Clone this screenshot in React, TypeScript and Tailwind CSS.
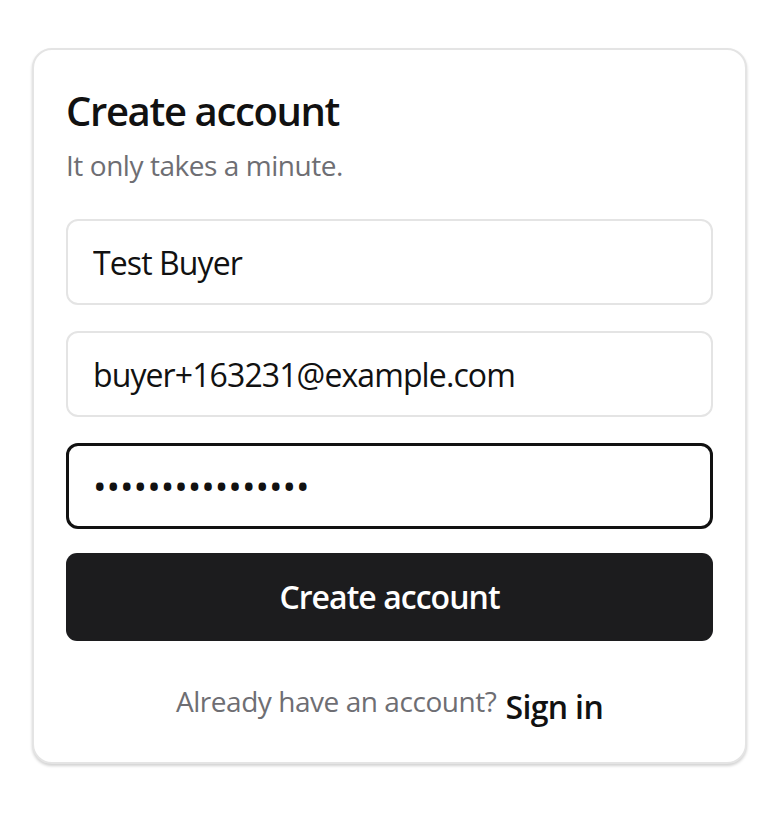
export default function App() {
  return (
    <div className="min-h-screen bg-white px-[32px] pt-[48px] font-['Open_Sans',sans-serif] tracking-[-0.028em]">
      <div className="w-[715px] rounded-[20px] border-2 border-[#e4e4e4] bg-white px-[32px] pt-[37px] pb-[35px] shadow-[0_2px_3px_rgba(0,0,0,0.18)]">
        <h1 className="text-[40px] font-semibold leading-[48px] tracking-[-0.034em] text-[#111]">Create account</h1>
        <p className="mt-[12px] text-[28px] leading-[36px] text-[#6e6e73]">It only takes a minute.</p>

        <form className="mt-[36px] flex flex-col gap-[26px]" onSubmit={(e) => e.preventDefault()}>
          <input
            type="text"
            defaultValue="Test Buyer"
            className="h-[86px] w-full rounded-[12px] border-2 border-[#e4e4e4] px-[25px] text-[32px] tracking-[-0.028em] text-[#111] outline-none"
          />
          <input
            type="email"
            defaultValue="buyer+163231@example.com"
            className="h-[86px] w-full rounded-[12px] border-2 border-[#e4e4e4] px-[25px] text-[32px] tracking-[-0.028em] text-[#111] outline-none"
          />
          <input
            type="password"
            defaultValue="testpassword1234"
            className="h-[86px] w-full rounded-[12px] border-[3px] border-[#111] px-[24px] text-[36px] tracking-normal text-[#111] outline-none"
          />
          <button
            type="submit"
            className="-mt-[2px] h-[88px] w-full rounded-[11px] bg-[#1c1c1e] text-[32px] font-semibold tracking-[-0.03em] text-white"
          >
            Create account
          </button>
        </form>

        <div className="mt-[42px] flex items-start justify-center gap-[9px]">
          <span className="text-[28px] leading-[36px] text-[#6e6e73]">Already have an account?</span>
          <button className="mt-[4px] text-[32px] font-semibold leading-[40px] tracking-[-0.02em] text-[#111]">Sign in</button>
        </div>
      </div>
    </div>
  );
}
